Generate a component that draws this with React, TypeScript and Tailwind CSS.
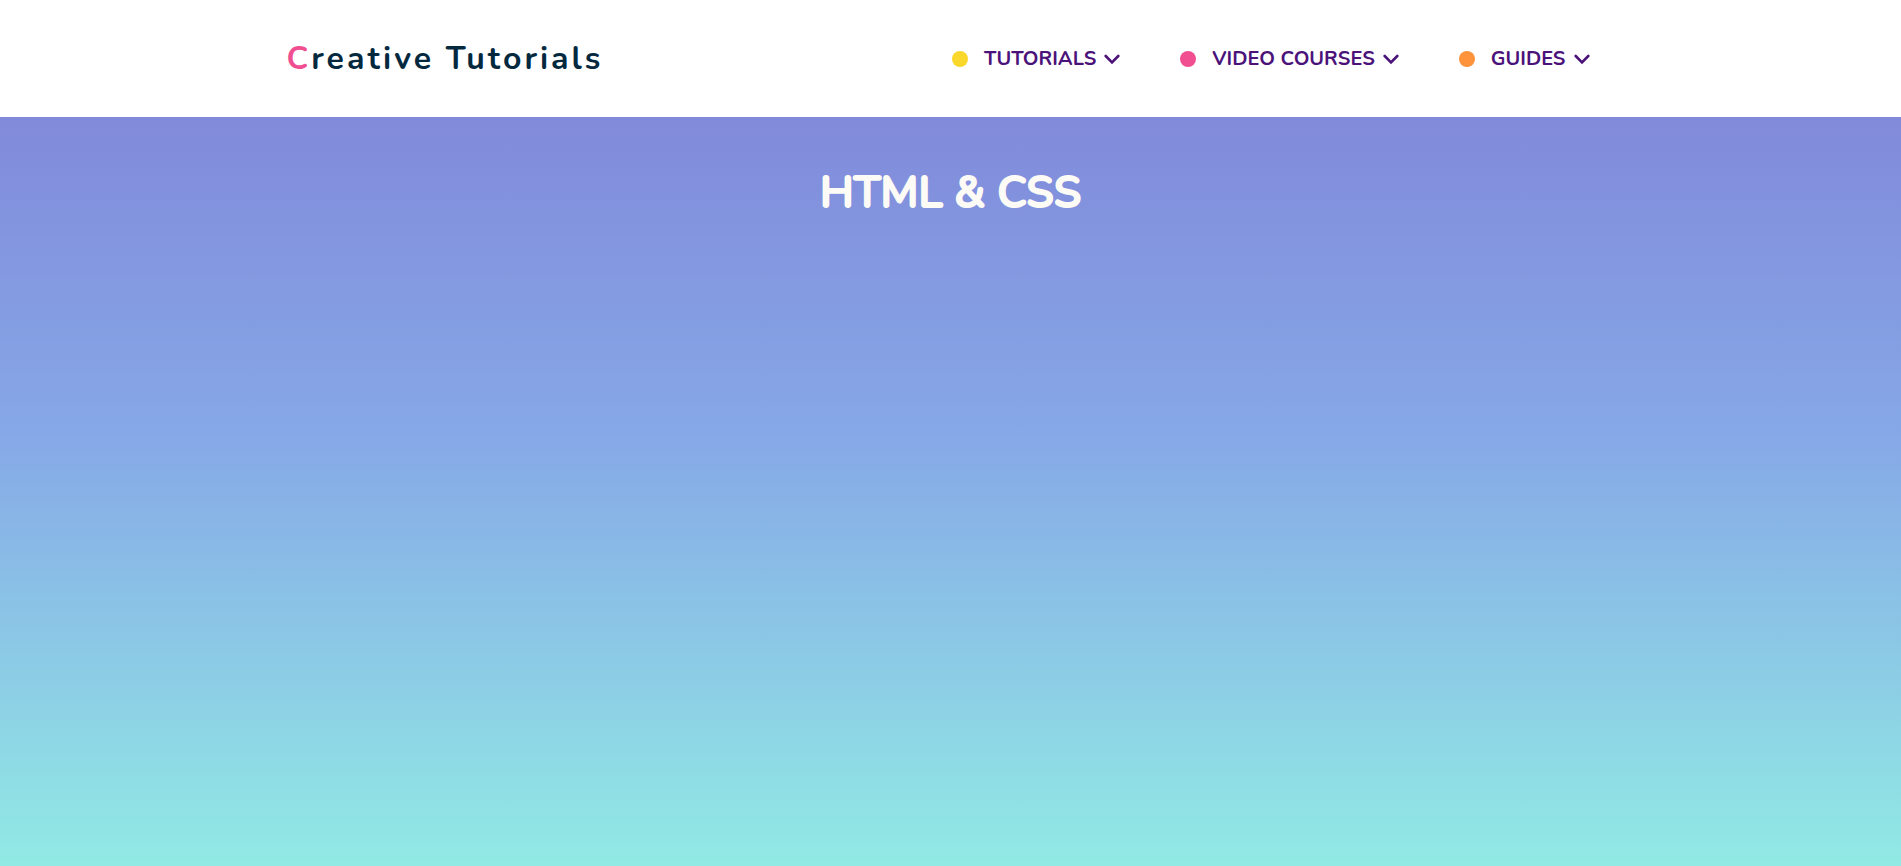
type MenuItem = { label: string; href: string; dot: string };

const menu: MenuItem[] = [
  { label: "TUTORIALS", href: "#tutorials", dot: "bg-[#fad72b]" },
  { label: "VIDEO COURSES", href: "#video-courses", dot: "bg-[#f04e90]" },
  { label: "GUIDES", href: "#guides", dot: "bg-[#ff933b]" },
];

function Chevron() {
  return (
    <svg
      className="ml-2 h-4 w-4"
      viewBox="0 0 16 16"
      fill="none"
      stroke="currentColor"
      strokeWidth="2.6"
      strokeLinecap="round"
      strokeLinejoin="miter"
      aria-hidden="true"
    >
      <path d="M1.7 5 L8 11.3 L14.3 5" />
    </svg>
  );
}

export default function App() {
  return (
    <div className="flex min-h-screen flex-col bg-linear-to-b/srgb from-[#7f7fd5] via-[#86a8e7] to-[#91eae4] font-[Nunito,Lato,sans-serif]">
      <header className="bg-white">
        <div className="mx-auto flex h-[117px] max-w-[1328px] items-center justify-between pr-[25px]">
          <a href="#home" className="text-[32px] font-bold leading-10 tracking-[3px] text-[#04293f]">
            <span className="text-[#f04e90]">C</span>reative Tutorials
          </a>
          <nav aria-label="Main">
            <ul className="flex items-center gap-[60px]">
              {menu.map((item) => (
                <li key={item.label}>
                  <a href={item.href} className="flex items-center text-[20px] font-bold leading-7 text-[#4b137a]">
                    <span className={`mr-4 h-4 w-4 rounded-full ${item.dot}`} />
                    {item.label}
                    <Chevron />
                  </a>
                </li>
              ))}
            </ul>
          </nav>
        </div>
      </header>
      <main className="flex-1 pt-11">
        <h1 className="text-center text-[44px] font-semibold leading-[64px] text-[#fdfbf6] [-webkit-text-stroke:2px_#fdfbf6]">HTML &amp; CSS</h1>
      </main>
    </div>
  );
}
